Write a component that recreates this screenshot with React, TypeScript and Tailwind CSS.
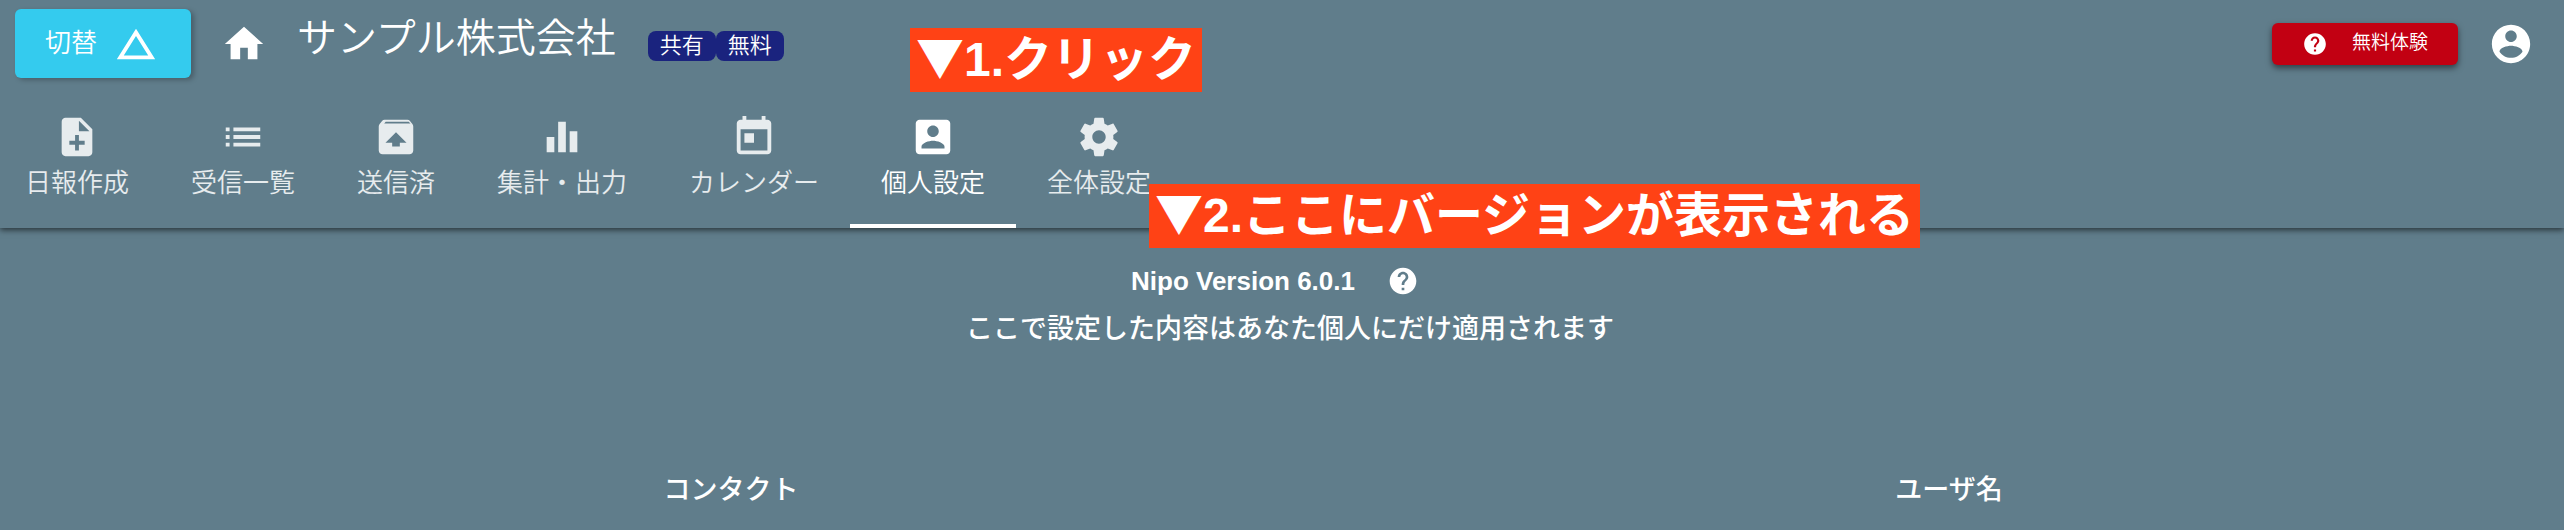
import type { ReactNode } from "react";

type IconProps = { d: string; className?: string };

function Icon({ d, className = "size-[46px]" }: IconProps) {
  return (
    <svg viewBox="0 0 24 24" fill="currentColor" aria-hidden="true" className={`shrink-0 ${className}`}>
      <path d={d} />
    </svg>
  );
}

const paths = {
  triangle: "M12 7.77 18.39 18H5.61L12 7.77M12 4 2 20h20L12 4z",
  home: "M10 20v-6h4v6h5v-8h3L12 3 2 12h3v8z",
  noteAdd:
    "M14 2H6c-1.1 0-1.99.9-1.99 2L4 20c0 1.1.89 2 1.99 2H18c1.1 0 2-.9 2-2V8l-6-6zm2 14h-3v3h-2v-3H8v-2h3v-3h2v3h3v2zm-3-7V3.5L18.5 9H13z",
  list: "M3 13h2v-2H3v2zm0 4h2v-2H3v2zm0-8h2V7H3v2zm4 4h14v-2H7v2zm0 4h14v-2H7v2zM7 7v2h14V7H7z",
  unarchive:
    "M20.55 5.22l-1.39-1.68C18.88 3.21 18.47 3 18 3H6c-.47 0-.88.21-1.15.55L3.46 5.22C3.17 5.57 3 6.01 3 6.5V19c0 1.1.89 2 2 2h14c1.1 0 2-.9 2-2V6.5c0-.49-.17-.93-.45-1.28zM12 9.5l5.5 5.5H14v2h-4v-2H6.5L12 9.5zM5.82 5l.82-1h12l.93 1H5.82z",
  equalizer: "M10 20h4V4h-4v16zm-6 0h4v-8H4v8zM16 9v11h4V9h-4z",
  today:
    "M19 3h-1V1h-2v2H8V1H6v2H5c-1.11 0-1.99.9-1.99 2L3 19c0 1.1.89 2 2 2h14c1.1 0 2-.9 2-2V5c0-1.1-.9-2-2-2zm0 16H5V8h14v11zM7 10h5v5H7z",
  accountBox:
    "M3 5v14c0 1.1.89 2 2 2h14c1.1 0 2-.9 2-2V5c0-1.1-.9-2-2-2H5c-1.11 0-2 .9-2 2zm12 4c0 1.66-1.34 3-3 3s-3-1.34-3-3 1.34-3 3-3 3 1.34 3 3zm-9 8c0-2 4-3.1 6-3.1s6 1.1 6 3.1v1H6v-1z",
  settings:
    "M19.43 12.98c.04-.32.07-.64.07-.98s-.03-.66-.07-.98l2.11-1.65c.19-.15.24-.42.12-.64l-2-3.46c-.12-.22-.39-.3-.61-.22l-2.49 1c-.52-.4-1.08-.73-1.69-.98l-.38-2.65C14.46 2.18 14.25 2 14 2h-4c-.25 0-.46.18-.49.42l-.38 2.65c-.61.25-1.17.59-1.69.98l-2.49-1c-.23-.09-.49 0-.61.22l-2 3.46c-.13.22-.07.49.12.64l2.11 1.65c-.04.32-.07.65-.07.98s.03.66.07.98l-2.11 1.65c-.19.15-.24.42-.12.64l2 3.46c.12.22.39.3.61.22l2.49-1c.52.4 1.08.73 1.69.98l.38 2.65c.03.24.24.42.49.42h4c.25 0 .46-.18.49-.42l.38-2.65c.61-.25 1.17-.59 1.69-.98l2.49 1c.23.09.49 0 .61-.22l2-3.46c.12-.22.07-.49-.12-.64l-2.11-1.65zM12 15.5c-1.93 0-3.5-1.57-3.5-3.5s1.57-3.5 3.5-3.5 3.5 1.57 3.5 3.5-1.57 3.5-3.5 3.5z",
  help: "M12 2C6.48 2 2 6.48 2 12s4.48 10 10 10 10-4.48 10-10S17.52 2 12 2zm1 17h-2v-2h2v2zm2.07-7.75l-.9.92C13.45 12.9 13 13.5 13 15h-2v-.5c0-1.1.45-2.1 1.17-2.83l1.24-1.26c.37-.36.59-.86.59-1.41 0-1.1-.9-2-2-2s-2 .9-2 2H8c0-2.21 1.79-4 4-4s4 1.79 4 4c0 .88-.36 1.68-.93 2.25z",
  accountCircle:
    "M12 2C6.48 2 2 6.48 2 12s4.48 10 10 10 10-4.48 10-10S17.52 2 12 2zm0 3c1.66 0 3 1.34 3 3s-1.34 3-3 3-3-1.34-3-3 1.34-3 3-3zm0 14.2c-2.5 0-4.71-1.28-6-3.22.03-1.99 4-3.08 6-3.08 1.99 0 5.97 1.09 6 3.08-1.29 1.94-3.5 3.22-6 3.22z",
};

const tabs = [
  { label: "日報作成", icon: paths.noteAdd },
  { label: "受信一覧", icon: paths.list },
  { label: "送信済", icon: paths.unarchive },
  { label: "集計・出力", icon: paths.equalizer },
  { label: "カレンダー", icon: paths.today },
  { label: "個人設定", icon: paths.accountBox, active: true },
  { label: "全体設定", icon: paths.settings },
];

function Badge({ children }: { children: ReactNode }) {
  return (
    <span className="rounded-lg bg-[#1a237e] px-3 text-[22px] leading-[30px] font-[350]">{children}</span>
  );
}

function Callout({ children, className }: { children: ReactNode; className: string }) {
  return (
    <p className={`absolute bg-[#ff4215] px-1.5 text-[48px] leading-[64px] font-bold whitespace-nowrap ${className}`}>
      <span className="font-['Noto_Sans_CJK_JP',sans-serif] leading-none">▼</span>
      {children}
    </p>
  );
}

export default function App() {
  return (
    <div className="relative min-h-screen overflow-hidden bg-[#607d8b] font-['Liberation_Sans','Noto_Sans_CJK_JP',sans-serif] text-white">
      <header className="relative shadow-[0_2px_6px_rgba(0,0,0,0.6)]">
        <div className="flex h-[87px] items-center pr-[30px] pl-[15px]">
          <button className="flex h-[69px] items-center gap-4 rounded-md bg-[#34cbee] pr-8 pl-[30px] text-[26px] font-[350] shadow-[3px_2px_5px_rgba(0,0,0,0.25)]">
            切替
            <Icon d={paths.triangle} className="size-[46px]" />
          </button>
          <a href="#home" aria-label="ホーム" className="ml-[30px]">
            <Icon d={paths.home} />
          </a>
          <h1 className="mb-3 ml-[30px] text-[40px] leading-[48px] font-[350]">サンプル株式会社</h1>
          <div className="ml-8 flex pt-1">
            <Badge>共有</Badge>
            <Badge>無料</Badge>
          </div>
          <button className="ml-auto flex h-[42px] items-center gap-6 rounded-md bg-[#c20012] px-[30px] text-[19px] font-[350] shadow-[0_3px_6px_rgba(0,0,0,0.5)]">
            <Icon d={paths.help} className="size-[26px]" />
            無料体験
          </button>
          <button aria-label="アカウント" className="ml-[30px]">
            <Icon d={paths.accountCircle} />
          </button>
        </div>
        <nav className="-ml-1.5 flex h-[141px]">
          {tabs.map((tab) => (
            <button
              key={tab.label}
              className={`flex flex-col items-center border-b-4 px-[31px] pt-[27px] text-[26px] leading-[46px] font-[350] ${
                tab.active ? "border-white" : "border-transparent text-white/85"
              }`}
            >
              <Icon d={tab.icon} />
              {tab.label}
            </button>
          ))}
        </nav>
      </header>

      <main>
        <section className="flex flex-col items-center pt-[29px] pl-4">
          <div className="flex items-center gap-8 pr-[30px]">
            <h2 className="text-[26px] leading-[48px] font-bold">Nipo Version 6.0.1</h2>
            <button aria-label="ヘルプ">
              <Icon d={paths.help} className="size-8" />
            </button>
          </div>
          <p className="text-[27px] leading-[48px] font-medium">ここで設定した内容はあなた個人にだけ適用されます</p>
        </section>
        <div className="mt-[113px] pr-1.5">
          <table className="w-full table-fixed text-[27px] leading-[48px]">
            <thead>
              <tr>
                <td className="w-[122px]" />
                <th className="font-medium">コンタクト</th>
                <th className="font-medium">ユーザ名</th>
              </tr>
            </thead>
          </table>
        </div>
      </main>

      <Callout className="top-7 left-[910px]">1.クリック</Callout>
      <Callout className="top-[184px] left-[1149px]">2.ここにバージョンが表示される</Callout>
    </div>
  );
}
